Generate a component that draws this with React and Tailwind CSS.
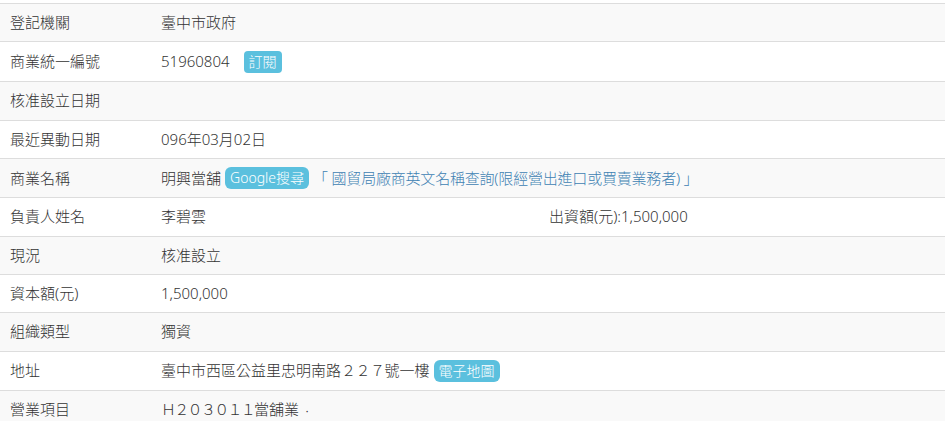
export default function App() {
  const font = { fontFamily: '"Noto Sans", "Noto Sans CJK TC", sans-serif' };
  const Badge = ({ children, cls = "" }) => (
    <span className={`inline-block rounded-[4px] bg-[#5bc0de] px-[5px] text-white text-[14px] leading-[22px] ${cls}`}>{children}</span>
  );
  const FW = ({ children }) => <span className="tracking-[-1.7px]">{children}</span>;
  const rows = [
    ["登記機關", <span>臺中市政府</span>],
    ["商業統一編號", <span className="flex items-center">51960804<Badge cls="ml-[14px]">訂閱</Badge></span>, "py-[8.5px]"],
    ["核准設立日期", <span></span>],
    ["最近異動日期", <span>096年03月02日</span>],
    ["商業名稱", <span className="flex items-center">明興當舖<Badge cls="ml-[4px] text-[14px] rounded-[6px] px-[4px] leading-[21.4px]">Google搜尋</Badge><span className="ml-[4px] text-[#3f82b3] tracking-[-0.2px]">「 國貿局廠商英文名稱查詢(限經營出進口或買賣業務者) 」</span></span>],
    ["負責人姓名", <span className="flex"><span className="w-[388px]">李碧雲</span><span>出資額(元):1,500,000</span></span>],
    ["現況", <span>核准設立</span>],
    ["資本額(元)", <span>1,500,000</span>],
    ["組織類型", <span>獨資</span>],
    ["地址", <span className="flex items-center">臺中市西區公益里忠明南路<span className="tracking-[-0.5px]">２２７</span>號一樓<Badge cls="ml-[4px] text-[14px] rounded-[6px] leading-[20px] px-[4px]">電子地圖</Badge></span>],
    ["營業項目", <span><FW>Ｈ２０３０１１</FW>當舖業<span className="ml-[6px]">‧</span></span>],
  ];
  return (
    <div className="w-[952px] h-[421px] overflow-hidden bg-white pt-[3px] text-[15px] text-[#333] font-light" style={font}>
      <div className="w-[945px]">
        {rows.map(([label, value, py], i) => (
          <div
            key={i}
            className={`flex border-t border-[#dddddd] ${i % 2 === 0 ? "bg-[#f9f9f9]" : "bg-white"}`}
          >
            <div className="w-[151px] shrink-0 pl-[10px] py-[8px] leading-[21.4px] self-center">{label}</div>
            <div className={`pl-[10px] leading-[21.4px] flex items-center ${py || "py-[8px]"}`}>{value}</div>
          </div>
        ))}
      </div>
    </div>
  );
}
